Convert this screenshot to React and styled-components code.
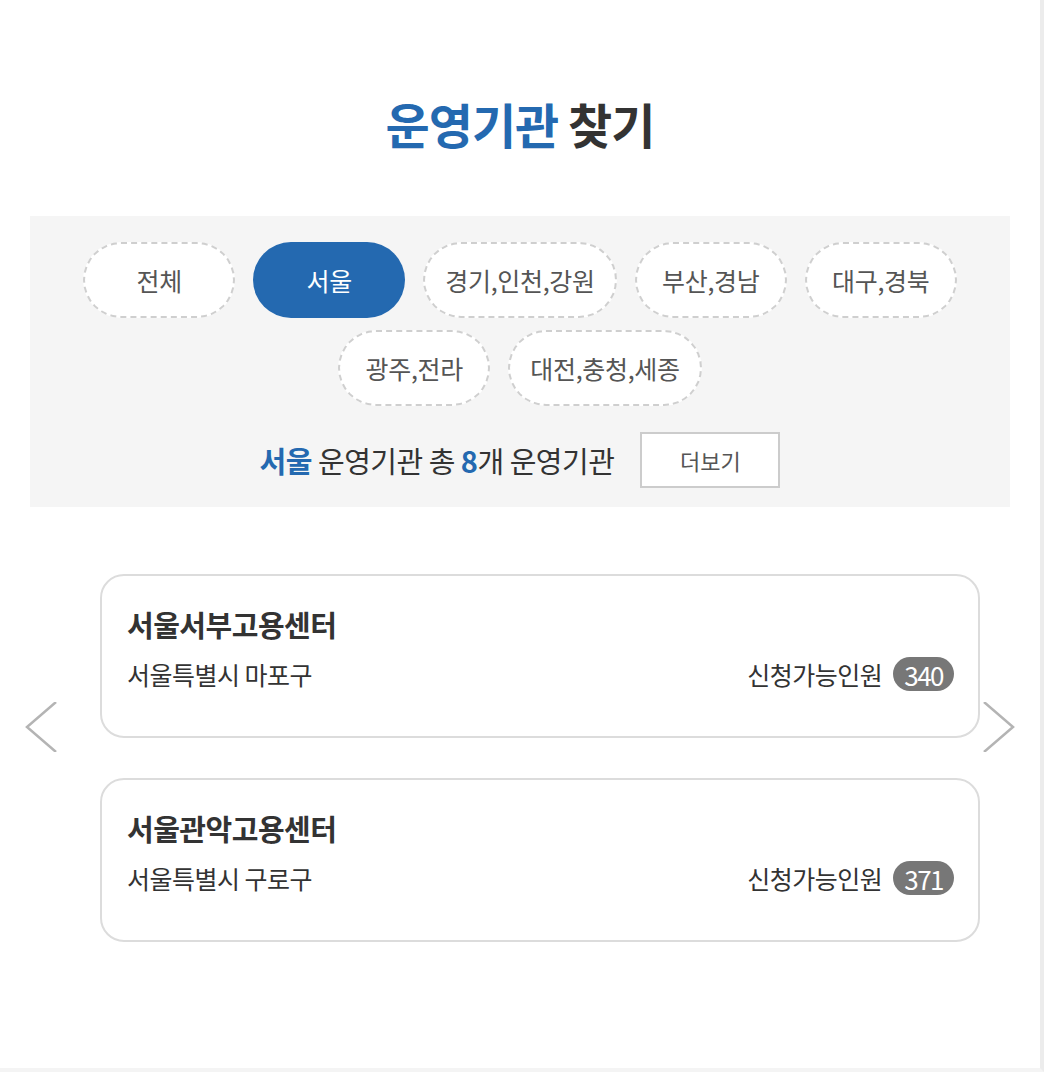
import React from 'react'
import styled, { createGlobalStyle } from 'styled-components'

const GlobalStyle = createGlobalStyle`
  body {
    margin: 0;
    background: #fff;
    font-family: "Noto Sans CJK KR", "Noto Sans", sans-serif;
  }
`

const BLUE = '#2469b0'

const Page = styled.div`
  width: 1040px;
  height: 1068px;
  border-right: 4px solid #ececec;
  border-bottom: 4px solid #f4f4f4;
  background: #fff;
`

const Title = styled.h2`
  margin: 0;
  padding-top: 100px;
  height: 120px;
  box-sizing: border-box;
  text-align: center;
  font-size: 48px;
  font-weight: 700;
  line-height: 47px;
  letter-spacing: -1px;
  color: #333;

  em {
    font-style: normal;
    color: ${BLUE};
  }
`

const FilterBox = styled.div`
  margin: 96px 30px 0;
  height: 291px;
  box-sizing: border-box;
  padding: 26px 0 0;
  background: #f5f5f5;
`

const ChipRow = styled.div`
  display: flex;
  flex-wrap: wrap;
  justify-content: center;
  gap: 12px 18px;
  padding: 0 40px;
`

const Chip = styled.button`
  min-width: 152px;
  height: 76px;
  padding: 0 20px;
  box-sizing: border-box;
  border-radius: 38px;
  border: 2px dashed ${({ $active }) => ($active ? BLUE : '#cfcfcf')};
  background: ${({ $active }) => ($active ? BLUE : '#fff')};
  color: ${({ $active }) => ($active ? '#fff' : '#555')};
  font-family: inherit;
  font-size: 25px;
  letter-spacing: -0.3px;
  cursor: pointer;
`

const Summary = styled.div`
  display: flex;
  align-items: center;
  justify-content: center;
  gap: 26px;
  margin-top: 26px;
`

const SummaryText = styled.p`
  margin: 0;
  font-size: 29px;
  color: #333;
  letter-spacing: -0.5px;

  b {
    color: ${BLUE};
  }
`

const MoreButton = styled.button`
  width: 140px;
  height: 56px;
  border: 2px solid #ccc;
  background: #fff;
  color: #555;
  font-family: inherit;
  font-size: 22px;
  cursor: pointer;
`

const Carousel = styled.div`
  position: relative;
  margin-top: 67px;
  padding-left: 100px;
  display: flex;
  flex-direction: column;
  gap: 40px;
`

const Card = styled.div`
  width: 880px;
  height: 164px;
  box-sizing: border-box;
  border: 2px solid #dcdcdc;
  border-radius: 24px;
  padding: 28px 24px 0 25px;
  background: #fff;
`

const CardTitle = styled.h3`
  margin: 0;
  font-size: 29px;
  font-weight: 700;
  color: #333;
  line-height: 40px;
  letter-spacing: -0.5px;
`

const CardFoot = styled.div`
  display: flex;
  align-items: center;
  justify-content: space-between;
  margin-top: 12px;
`

const Address = styled.span`
  font-size: 25px;
  color: #333;
  letter-spacing: -0.5px;
`

const Capacity = styled.span`
  display: flex;
  align-items: center;
  gap: 11px;
  font-size: 25px;
  color: #333;
  letter-spacing: -0.5px;
`

const Badge = styled.span`
  display: inline-flex;
  align-items: center;
  justify-content: center;
  height: 34px;
  padding: 0 11px;
  border-radius: 17px;
  background: #777;
  color: #fff;
  font-size: 26px;
  letter-spacing: -1.5px;
`

const Arrow = styled.button`
  position: absolute;
  top: 128px;
  ${({ $side }) => ($side === 'left' ? 'left: 24px;' : 'left: 982px;')}
  width: 34px;
  height: 50px;
  padding: 0;
  border: 0;
  background: none;
  cursor: pointer;

  svg {
    display: block;
  }
`

const regions = ['전체', '서울', '경기,인천,강원', '부산,경남', '대구,경북', '광주,전라', '대전,충청,세종']

const centers = [
  { name: '서울서부고용센터', address: '서울특별시 마포구', count: 340 },
  { name: '서울관악고용센터', address: '서울특별시 구로구', count: 371 }
]

const Chevron = ({ dir }) => (
  <svg width="34" height="50" viewBox="0 0 34 50">
    <polyline
      points={dir === 'left' ? '32,0 3,25 32,50' : '2,0 31,25 2,50'}
      fill="none"
      stroke="#b4b4b4"
      strokeWidth="2.5"
    />
  </svg>
)

export default function App() {
  const active = '서울'

  return (
    <Page>
      <GlobalStyle />
      <Title><em>운영기관</em> 찾기</Title>

      <FilterBox>
        <ChipRow>
          {regions.map((item) => (
            <Chip key={item} $active={item === active}>{item}</Chip>
          ))}
        </ChipRow>
        <Summary>
          <SummaryText>
            <b>{active}</b> 운영기관 총 <b>8</b>개 운영기관
          </SummaryText>
          <MoreButton>더보기</MoreButton>
        </Summary>
      </FilterBox>

      <Carousel>
        <Arrow $side="left" aria-label="이전"><Chevron dir="left" /></Arrow>
        {centers.map((c) => (
          <Card key={c.name}>
            <CardTitle>{c.name}</CardTitle>
            <CardFoot>
              <Address>{c.address}</Address>
              <Capacity>신청가능인원 <Badge>{c.count}</Badge></Capacity>
            </CardFoot>
          </Card>
        ))}
        <Arrow $side="right" aria-label="다음"><Chevron dir="right" /></Arrow>
      </Carousel>
    </Page>
  )
}
